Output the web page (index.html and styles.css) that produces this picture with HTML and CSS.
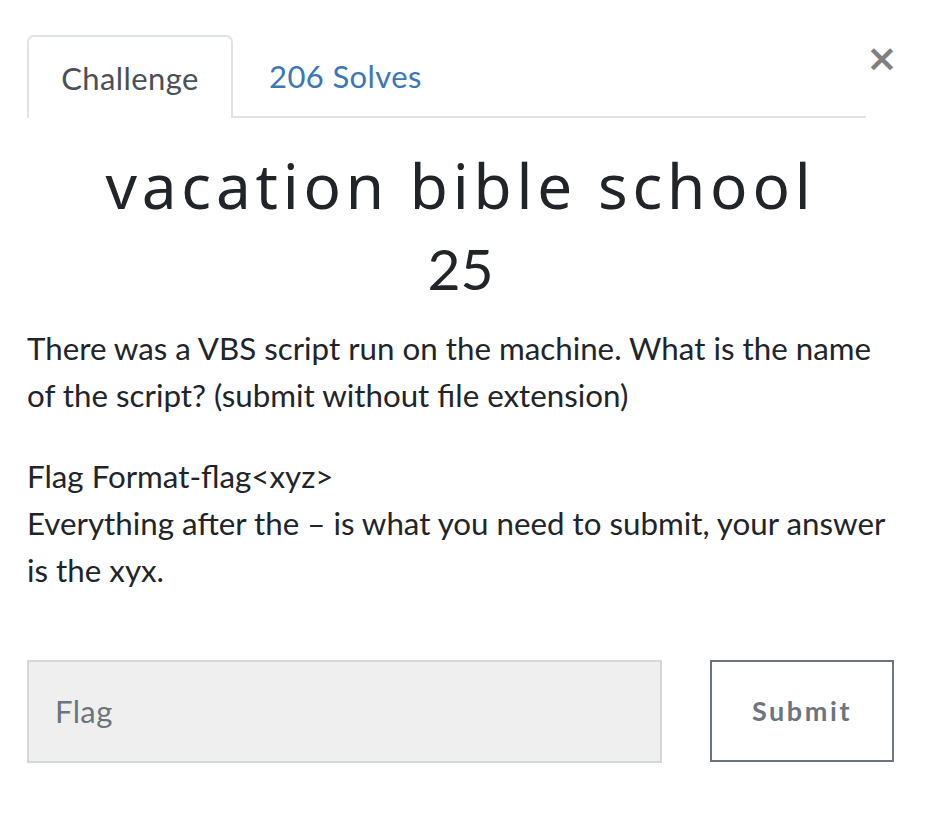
FILE: index.html
```html
<!DOCTYPE html>
<html lang="en">
<head>
<meta charset="utf-8">
<title>vacation bible school</title>
<link rel="stylesheet" href="styles.css">
</head>
<body>
<div class="modal">
  <div class="header">
    <nav class="tabs">
      <a class="tab active">Challenge</a>
      <a class="tab link">206 Solves</a>
    </nav>
    <button class="close" aria-label="Close">×</button>
  </div>
  <h2 class="title">vacation bible school</h2>
  <h3 class="points">25</h3>
  <div class="desc">
    <p>There was a VBS script run on the machine. What is the name of the script? (submit without file extension)</p>
    <p>Flag Format-flag&lt;xyz&gt;<br>Everything after the – is what you need to submit, your answer is the xyx.</p>
  </div>
  <form class="submit-row">
    <input class="flag" type="text" placeholder="Flag">
    <button class="submit" type="button">Submit</button>
  </form>
</div>
</body>
</html>
```
FILE: styles.css
```css
html, body {
  margin: 0;
  background: #fff;
}
body {
  font-family: Lato, "Liberation Sans", sans-serif;
  color: #212529;
}
.modal {
  padding: 35px 36px 0 27px;
}
.header {
  display: flex;
  align-items: flex-start;
}
.tabs {
  flex: 1;
  display: flex;
  border-bottom: 2px solid #dee2e6;
  height: 81px;
}
.tab {
  display: flex;
  align-items: center;
  font-size: 31px;
  letter-spacing: 0.4px;
  height: 81px;
  box-sizing: border-box;
}
.tab.active {
  color: #495057;
  border: 2px solid #dee2e6;
  border-bottom: none;
  border-radius: 7px 7px 0 0;
  background: #fff;
  height: 83px;
  width: 206px;
  justify-content: center;
  padding: 0;
}
.tab.link {
  color: #3a77b8;
  padding: 0 36px;
}
.close {
  width: 28px;
  margin-top: 4px;
  padding: 0;
  border: none;
  background: none;
  font-family: "DejaVu Sans", sans-serif;
  font-weight: bold;
  font-size: 38px;
  line-height: 1;
  color: #808080;
  text-align: right;
}
.title {
  margin: 30px 0 0;
  text-align: center;
  font-family: "Noto Sans", sans-serif;
  font-weight: 400;
  font-size: 62px;
  letter-spacing: 4.8px;
  line-height: 1.2;
  color: #212529;
}
.points {
  margin: 12px 0 0;
  text-align: center;
  font-weight: 400;
  font-size: 57px;
  line-height: 1.2;
}
.desc {
  margin-top: 22px;
  font-size: 31.3px;
  line-height: 47px;
}
.desc p {
  margin: 0 0 34px;
}
.submit-row {
  display: flex;
  gap: 48px;
  margin-top: 66px;
}
.flag {
  flex: 1;
  height: 103px;
  box-sizing: border-box;
  border: 2px solid #d3d7dc;
  background: #efefef;
  padding: 0 26px;
  font-family: Lato, sans-serif;
  font-size: 31px;
  letter-spacing: 0.4px;
  color: #495057;
  outline: none;
}
.flag::placeholder {
  color: #6c757d;
}
.submit {
  width: 184px;
  height: 102px;
  box-sizing: border-box;
  border: 2px solid #6c757d;
  background: #fff;
  color: #6c757d;
  font-family: Lato, sans-serif;
  font-weight: 700;
  font-size: 27px;
  letter-spacing: 2.6px;
}
```
